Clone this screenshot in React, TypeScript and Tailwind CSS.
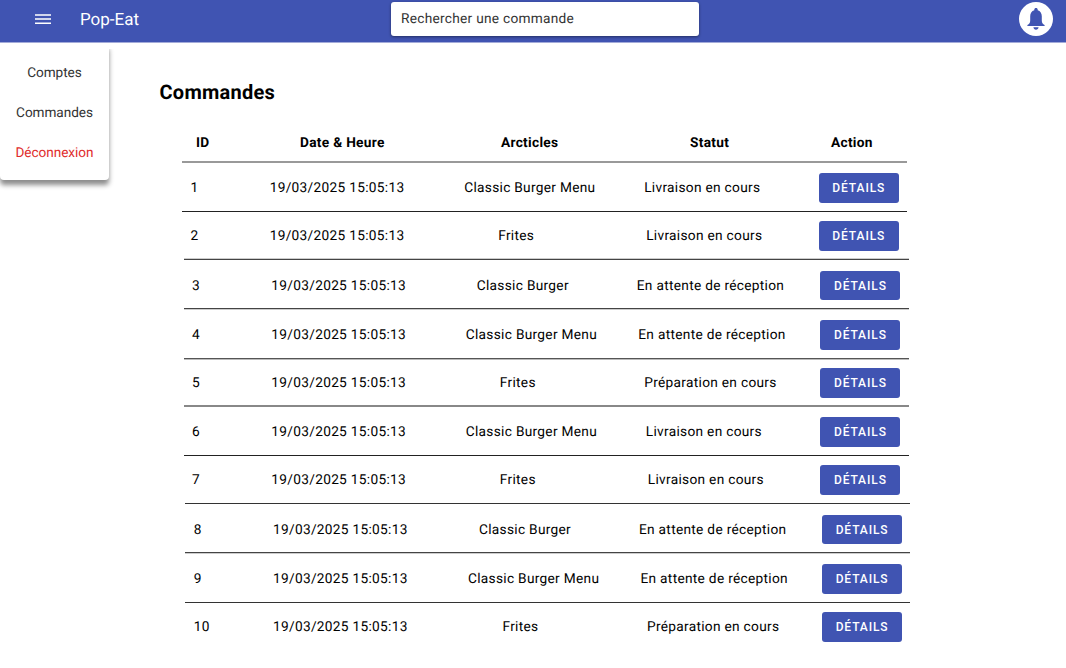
import React from "react";

type Order = {
  id: number;
  article: string;
  status: string;
  row: string;
  line: string;
  articlePad: string;
  statusPad: string;
};

const orders: Order[] = [
  { id: 1, article: "Classic Burger Menu", status: "Livraison en cours", row: "h-[48px] ml-[182px] pt-[10px]", line: "ml-[182px] border-t border-[#222]", articlePad: "pl-[34px]", statusPad: "pl-[24px]" },
  { id: 2, article: "Frites", status: "Livraison en cours", row: "h-[46px] ml-[182px] pt-[9px]", line: "ml-[184px] border-t border-t-[#ccc] border-b border-b-[#444]", articlePad: "pl-[68px]", statusPad: "pl-[26px]" },
  { id: 3, article: "Classic Burger", status: "En attente de réception", row: "h-[48px] ml-[183.600px] pt-[10.5px]", line: "ml-[184px] border-t border-b border-t-[#444] border-b-[#ccc]", articlePad: "pl-[45px]", statusPad: "pl-[15px]" },
  { id: 4, article: "Classic Burger Menu", status: "En attente de réception", row: "h-[48px] ml-[183.600px] pt-[10px]", line: "ml-[184px] border-t border-b border-t-[#555] border-b-[#bbb]", articlePad: "pl-[34px]", statusPad: "pl-[16.5px]" },
  { id: 5, article: "Frites", status: "Préparation en cours", row: "h-[45px] ml-[183.600px] pt-[8px]", line: "ml-[184px] border-t border-b border-t-[#888] border-b-[#888]", articlePad: "pl-[68px]", statusPad: "pl-[22.5px]" },
  { id: 6, article: "Classic Burger Menu", status: "Livraison en cours", row: "h-[48px] ml-[183.600px] pt-[10px]", line: "ml-[184px] border-t border-[#222]", articlePad: "pl-[34px]", statusPad: "pl-[24px]" },
  { id: 7, article: "Frites", status: "Livraison en cours", row: "h-[47px] ml-[183.600px] pt-[9px]", line: "ml-[185px] border-t border-[#333]", articlePad: "pl-[68px]", statusPad: "pl-[26px]" },
  { id: 8, article: "Classic Burger", status: "En attente de réception", row: "h-[48px] ml-[185.300px] pt-[10.5px]", line: "ml-[185px] border-t border-b border-t-[#444] border-b-[#ccc]", articlePad: "pl-[45.5px]", statusPad: "pl-[15.5px]" },
  { id: 9, article: "Classic Burger Menu", status: "En attente de réception", row: "h-[48px] ml-[185.300px] pt-[10px]", line: "ml-[185px] border-t border-[#333]", articlePad: "pl-[34.5px]", statusPad: "pl-[17px]" },
  { id: 10, article: "Frites", status: "Préparation en cours", row: "h-[47px] ml-[185.300px] pt-[9px]", line: "hidden", articlePad: "pl-[69px]", statusPad: "pl-[23.5px]" },
];

const columns = "grid w-[725px] grid-cols-[87.700px_160.5px_190px_198.600px_80px] whitespace-nowrap";

function Header() {
  return (
    <header className="flex h-[43px] shrink-0 border-b border-[#a3abd9] bg-[#4054b2]">
      <button className="ml-[35px] mt-[14px] h-[10px] w-4" aria-label="Menu">
        <svg width="16" height="10" viewBox="0 0 16 10" className="block">
          <path d="M0 .9h16M0 5.100h16M0 9.300h16" stroke="#fff" strokeWidth="1.5" />
        </svg>
      </button>
      <div className="ml-[29px] mt-[9px] w-[311px] text-[17px] leading-[22px] text-white">Pop-Eat</div>
      <div className="mt-[2px] h-[34px] w-[308px] rounded-[3px] bg-white pl-[10px] text-[13.700px] leading-[34px] tracking-[0.27px] text-[#333] shadow-[0_1px_3px_rgba(0,0,0,0.45)]">
        Rechercher une commande
      </div>
      <div className="ml-[320px] mt-[2px] flex h-[34px] w-[34px] items-center justify-center rounded-full bg-white">
        <svg width="34" height="34" viewBox="0 0 34 34" fill="#4054b2">
          <path d="M17 6c-1 0-1.700.7-1.700 1.600v.6c-2.700.8-4.100 3-4.100 6v4.200c0 2.300-.9 3.300-2.800 4.600v.9h17.200V23c-1.900-1.300-2.800-2.300-2.800-4.600v-4.200c0-3-1.400-5.200-4.100-6v-.6C18.700 6.700 18 6 17 6zM14.400 25.300h5.200c-.2 1.500-1.200 2.500-2.600 2.500s-2.400-1-2.600-2.500z" />
        </svg>
      </div>
    </header>
  );
}

export default function App() {
  return (
    <div className="flex h-[668px] w-[1066px] flex-col overflow-hidden bg-white font-['Roboto',sans-serif] text-black [text-rendering:geometricPrecision]">
      <Header />
      <div className="grid grid-cols-[1066px]">
        <nav className="col-start-1 row-start-1 flex h-[137px] w-[109px] flex-col items-center rounded-[4px] pt-[20px] text-[13.600px] leading-[21px] tracking-[-0.05px] text-[#333] shadow-[0_5px_5px_rgba(0,0,0,0.45)] [clip-path:inset(6px_-12px_-14px_0)]">
          <a className="mb-[19px]">Comptes</a>
          <a className="mb-[19px]">Commandes</a>
          <a className="text-[#e02c2c]">Déconnexion</a>
        </nav>
        <main className="col-start-1 row-start-1 pt-[36px] text-[13.700px] leading-[30px] tracking-[0.3px]">
          <h1 className="ml-[159.5px] text-[20px] leading-[26px] font-bold tracking-[0.25px]">Commandes</h1>
          <div className="ml-[182px] mt-[23px] flex h-[33px] w-[725px] leading-[30px] font-bold">
            <span className="w-[118px] pl-[14px]">ID</span>
            <span className="w-[201px]">Date &amp; Heure</span>
            <span className="w-[189px]">Arcticles</span>
            <span className="w-[141px]">Statut</span>
            <span>Action</span>
          </div>
          <div className="ml-[182px] h-[2px] w-[725px] bg-[#999]" />
          {orders.map((o) => (
            <React.Fragment key={o.id}>
              <div className={`${columns} ${o.row}`}>
                <span className="pl-[8.5px]">{o.id}</span>
                <span>19/03/2025 15:05:13</span>
                <span className={o.articlePad}>{o.article}</span>
                <span className={o.statusPad}>{o.status}</span>
                <button className="h-[29.5px] w-20 rounded-[3px] bg-[#4054b2] text-center text-[12px] leading-[30px] font-medium tracking-[0.9px] text-white">
                  DÉTAILS
                </button>
              </div>
              <div className={`w-[725px] ${o.line}`} />
            </React.Fragment>
          ))}
        </main>
      </div>
    </div>
  );
}
